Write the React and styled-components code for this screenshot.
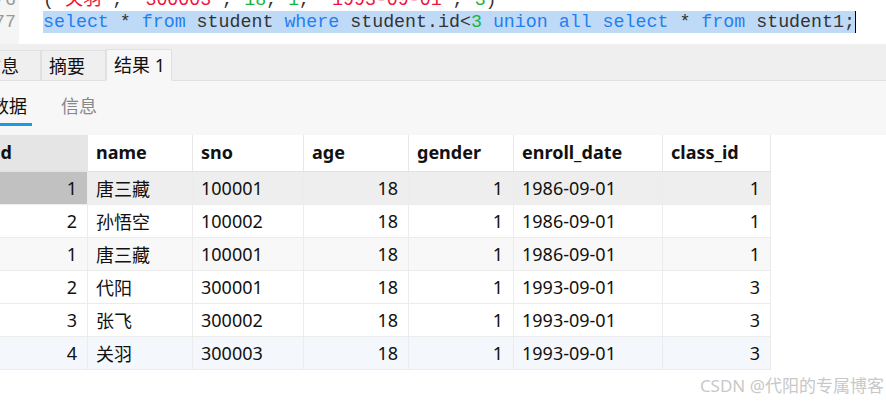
import React from "react";
import styled, { createGlobalStyle } from "styled-components";

const GlobalStyle = createGlobalStyle`
    html, body {
        margin: 0;
        padding: 0;
        background: #fff;
        overflow: hidden;
    }
    body {
        font-family: "Noto Sans", "Noto Sans CJK SC", sans-serif;
    }
`;

const Page = styled.div`
    position: relative;
    width: 886px;
    height: 401px;
    overflow: hidden;
    background: #fff;
`;

/* ---------- editor ---------- */

const Editor = styled.div`
    display: flex;
    height: 44px;
    overflow: hidden;
    background: #fff;
`;

const Gutter = styled.div`
    width: 19px;
    flex-shrink: 0;
    background: #f5f5f5;
    overflow: hidden;
`;

const Lines = styled.div`
    margin-top: -11px;
`;

const LineNo = styled.div`
    height: 22px;
    line-height: 22px;
    text-align: right;
    padding-right: 3px;
    white-space: nowrap;
    font-family: "Liberation Mono", "DejaVu Sans Mono", monospace;
    font-size: 18.3px;
    color: #999;
    direction: rtl;
`;

const Code = styled.div`
    flex: 1;
    padding-left: 24px;
    overflow: hidden;
`;

const CodeLine = styled.div`
    height: 22px;
    line-height: 22px;
    white-space: pre;
    font-family: "Liberation Mono", "DejaVu Sans Mono", "Noto Sans CJK SC", monospace;
    font-size: 18.3px;
    color: #333;
`;

const Selected = styled.span`
    display: inline-block;
    height: 22px;
    background: #bfdaf7;
    border-right: 1px solid #000;
`;

const Tok = styled.span`
    color: ${(p) =>
        p.$k === "kw" ? "#1f80f0" : p.$k === "num" ? "#16b53c" : p.$k === "str" ? "#f2123d" : "#333"};
`;

/* ---------- result tabs ---------- */

const TabBar = styled.div`
    display: flex;
    align-items: flex-end;
    height: 36px;
    background: #efefef;
    border-bottom: 1px solid #e2e2e2;
`;

const Tab = styled.div`
    box-sizing: border-box;
    min-width: 65px;
    height: ${(p) => (p.$active ? "32px" : "30px")};
    margin-bottom: ${(p) => (p.$active ? "-1px" : "0")};
    padding: 0 6px 2px 7px;
    display: flex;
    align-items: center;
    font-size: 18px;
    color: #111;
    white-space: nowrap;
    background: ${(p) => (p.$active ? "#f7f7f7" : "#efefef")};
    border: 1px solid #e0e0e0;
    border-bottom: ${(p) => (p.$active ? "1px solid #f7f7f7" : "none")};
    border-left: ${(p) => (p.$first ? "none" : "1px solid #e0e0e0")};
    margin-left: ${(p) => (p.$first ? "-24px" : "0")};
`;

const SubBar = styled.div`
    display: flex;
    align-items: stretch;
    gap: 24px;
    height: 54px;
    background: #f7f7f7;
`;

const SubTab = styled.div`
    box-sizing: border-box;
    display: flex;
    align-items: center;
    height: 45px;
    padding: 6px 5px 0;
    margin-left: ${(p) => (p.$first ? "-14px" : "0")};
    font-size: 18px;
    color: ${(p) => (p.$active ? "#111" : "#888")};
    border-bottom: 3px solid ${(p) => (p.$active ? "#1a9ae0" : "transparent")};
`;

/* ---------- grid ---------- */

const Table = styled.div`
    display: grid;
    grid-template-columns: 101px 105px 111px 105px 105px 149px 108px;
    width: max-content;
    margin-left: -13px;
    font-size: 18px;
    color: #111;
`;

const HeadCell = styled.div`
    box-sizing: border-box;
    height: 37px;
    display: flex;
    align-items: center;
    padding: 0 0 3px 8px;
    font-weight: 700;
    font-size: 18px;
    background: ${(p) => (p.$rowHead ? "#e5e5e5" : "#fff")};
    border-right: 1px solid #e6e6e6;
    border-bottom: 1px solid #e2e2e2;
`;

const Cell = styled.div`
    box-sizing: border-box;
    height: 33px;
    display: flex;
    align-items: center;
    justify-content: ${(p) => (p.$right ? "flex-end" : "flex-start")};
    padding: 0 ${(p) => (p.$right ? "10px" : "0")} 1px ${(p) => (p.$right ? "0" : "8px")};
    background: ${(p) => p.$bg};
    border-right: 1px solid #ececec;
    border-bottom: 1px solid #ececec;
    white-space: nowrap;
`;

const Watermark = styled.div`
    position: absolute;
    right: 2px;
    bottom: 4px;
    font-size: 17px;
    color: #c8c8c8;
    font-family: "Noto Sans", "Noto Sans CJK SC", sans-serif;
`;

const columns = [
    { key: "id", label: "id", right: true },
    { key: "name", label: "name" },
    { key: "sno", label: "sno" },
    { key: "age", label: "age", right: true },
    { key: "gender", label: "gender", right: true },
    { key: "enroll_date", label: "enroll_date" },
    { key: "class_id", label: "class_id", right: true },
];

const rows = [
    { id: 1, name: "唐三藏", sno: "100001", age: 18, gender: 1, enroll_date: "1986-09-01", class_id: 1, bg: "#eeeeee", idBg: "#c1c1c1" },
    { id: 2, name: "孙悟空", sno: "100002", age: 18, gender: 1, enroll_date: "1986-09-01", class_id: 1, bg: "#fff" },
    { id: 1, name: "唐三藏", sno: "100001", age: 18, gender: 1, enroll_date: "1986-09-01", class_id: 1, bg: "#f8f8f8" },
    { id: 2, name: "代阳", sno: "300001", age: 18, gender: 1, enroll_date: "1993-09-01", class_id: 3, bg: "#fff" },
    { id: 3, name: "张飞", sno: "300002", age: 18, gender: 1, enroll_date: "1993-09-01", class_id: 3, bg: "#fff" },
    { id: 4, name: "关羽", sno: "300003", age: 18, gender: 1, enroll_date: "1993-09-01", class_id: 3, bg: "#f4f8fc" },
];

const line76 = [
    ["", "("],
    ["str", "'关羽'"],
    ["", ", "],
    ["str", "'300003'"],
    ["", ", "],
    ["num", "18"],
    ["", ", "],
    ["num", "1"],
    ["", ", "],
    ["str", "'1993-09-01'"],
    ["", ", "],
    ["num", "3"],
    ["", ")"],
];

const line77 = [
    ["kw", "select"],
    ["", " * "],
    ["kw", "from"],
    ["", " student "],
    ["kw", "where"],
    ["", " student.id<"],
    ["num", "3"],
    ["", " "],
    ["kw", "union all select"],
    ["", " * "],
    ["kw", "from"],
    ["", " student1;"],
];

function App() {
    return (
        <Page>
            <GlobalStyle />
            <Editor>
                <Gutter>
                    <Lines>
                        <LineNo>76</LineNo>
                        <LineNo>77</LineNo>
                    </Lines>
                </Gutter>
                <Code>
                    <Lines>
                        <CodeLine>
                            {line76.map(([k, t], i) => (
                                <Tok key={i} $k={k}>{t}</Tok>
                            ))}
                        </CodeLine>
                        <CodeLine>
                            <Selected>
                                {line77.map(([k, t], i) => (
                                    <Tok key={i} $k={k}>{t}</Tok>
                                ))}
                            </Selected>
                        </CodeLine>
                    </Lines>
                </Code>
            </Editor>

            <TabBar>
                <Tab $first>信息</Tab>
                <Tab>摘要</Tab>
                <Tab $active>结果 1</Tab>
            </TabBar>

            <SubBar>
                <SubTab $first $active>数据</SubTab>
                <SubTab>信息</SubTab>
            </SubBar>

            <Table>
                {columns.map((c, i) => (
                    <HeadCell key={c.key} $rowHead={i === 0}>{c.label}</HeadCell>
                ))}
                {rows.map((r, ri) =>
                    columns.map((c, ci) => (
                        <Cell
                            key={ri + "-" + c.key}
                            $right={c.right}
                            $bg={ci === 0 && r.idBg ? r.idBg : r.bg}
                        >
                            {r[c.key]}
                        </Cell>
                    ))
                )}
            </Table>

            <Watermark>CSDN @代阳的专属博客</Watermark>
        </Page>
    );
}

export default App;
